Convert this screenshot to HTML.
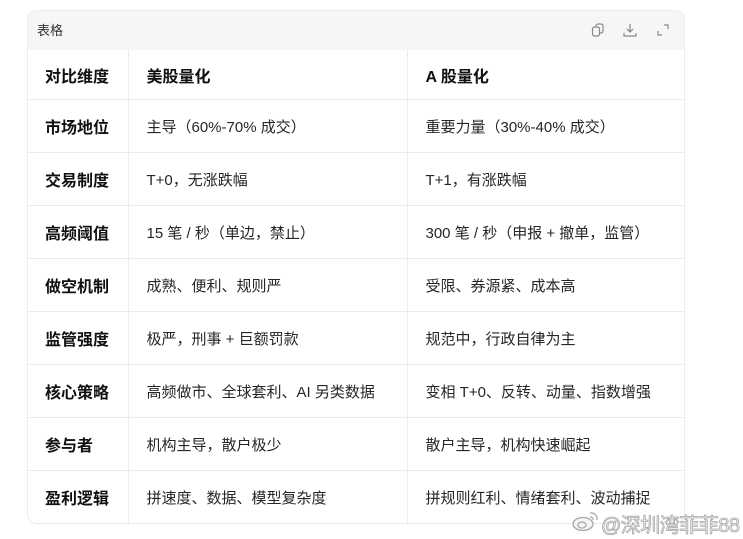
<!DOCTYPE html>
<html><head><meta charset="utf-8"><style>
body{margin:0;width:743px;height:539px;background:#fff;font-family:"Liberation Sans","Noto Sans CJK SC",sans-serif;color:#1f1f1f;position:relative;overflow:hidden}
.card{position:absolute;left:27px;top:10px;width:656px;height:512px;border:1px solid #ececec;border-radius:10px;overflow:hidden}
.hd{height:39px;background:#f5f6f7;font-size:13px;line-height:39px;padding-left:9px;color:#333;position:relative}
.ic{position:absolute;top:12px;width:14px;height:14px}
table{border-collapse:collapse;width:100%;table-layout:fixed}
td{border-bottom:1px solid #ececec;border-right:1px solid #ececec;height:52px;padding:0 0 0 18px;font-size:15px;color:#262626}
td:first-child{padding-left:17px;font-weight:bold;font-size:16px;color:#111}
td:last-child{border-right:none}
tr:first-child td{height:49px;font-weight:bold;font-size:16px;color:#111}
tr:last-child td{border-bottom:none}
.wm{position:absolute;left:601px;top:509px;white-space:nowrap;font-size:20px;letter-spacing:-0.5px;color:#f4f4f4;-webkit-text-stroke:0.8px #a8a8a8;font-family:"Liberation Sans","Noto Sans CJK SC",sans-serif}
.logo{position:absolute;left:572px;top:510px}
</style></head><body>
<div class="card">
<div class="hd">表格
<svg class="ic" style="left:563px" viewBox="0 0 14 14" fill="none" stroke="#888" stroke-width="1.2"><rect x="1.5" y="4" width="7" height="9" rx="2"/><path d="M5 4V3a2 2 0 0 1 2-2h3a2 2 0 0 1 2 2v5a2 2 0 0 1-2 2H9"/></svg>
<svg class="ic" style="left:595px" viewBox="0 0 14 14" fill="none" stroke="#888" stroke-width="1.2"><path d="M7 1v8M4 6l3 3 3-3M1 10v3h12v-3"/></svg>
<svg class="ic" style="left:628px" viewBox="0 0 14 14" fill="none" stroke="#888" stroke-width="1.2"><path d="M8 2h4v4M6 12H2V8"/></svg>
</div>
<table>
<colgroup><col style="width:100px"><col style="width:279px"><col></colgroup>
<tr><td>对比维度</td><td>美股量化</td><td>A 股量化</td></tr>
<tr><td>市场地位</td><td>主导（60%-70% 成交）</td><td>重要力量（30%-40% 成交）</td></tr>
<tr><td>交易制度</td><td>T+0，无涨跌幅</td><td>T+1，有涨跌幅</td></tr>
<tr><td>高频阈值</td><td>15 笔 / 秒（单边，禁止）</td><td>300 笔 / 秒（申报 + 撤单，监管）</td></tr>
<tr><td>做空机制</td><td>成熟、便利、规则严</td><td>受限、券源紧、成本高</td></tr>
<tr><td>监管强度</td><td>极严，刑事 + 巨额罚款</td><td>规范中，行政自律为主</td></tr>
<tr><td>核心策略</td><td>高频做市、全球套利、AI 另类数据</td><td>变相 T+0、反转、动量、指数增强</td></tr>
<tr><td>参与者</td><td>机构主导，散户极少</td><td>散户主导，机构快速崛起</td></tr>
<tr><td>盈利逻辑</td><td>拼速度、数据、模型复杂度</td><td>拼规则红利、情绪套利、波动捕捉</td></tr>
</table>
</div>
<svg class="logo" width="28" height="22" viewBox="0 0 28 22" fill="#f4f4f4" stroke="#a8a8a8" stroke-width="1.3"><ellipse cx="11" cy="14" rx="10" ry="6.5"/><ellipse cx="10" cy="15" rx="4" ry="3"/><path d="M18 3a6 6 0 0 1 7 7M18 7a2.5 2.5 0 0 1 3 3" fill="none"/></svg>
<div class="wm">@深圳湾菲菲88</div>
</body></html>
